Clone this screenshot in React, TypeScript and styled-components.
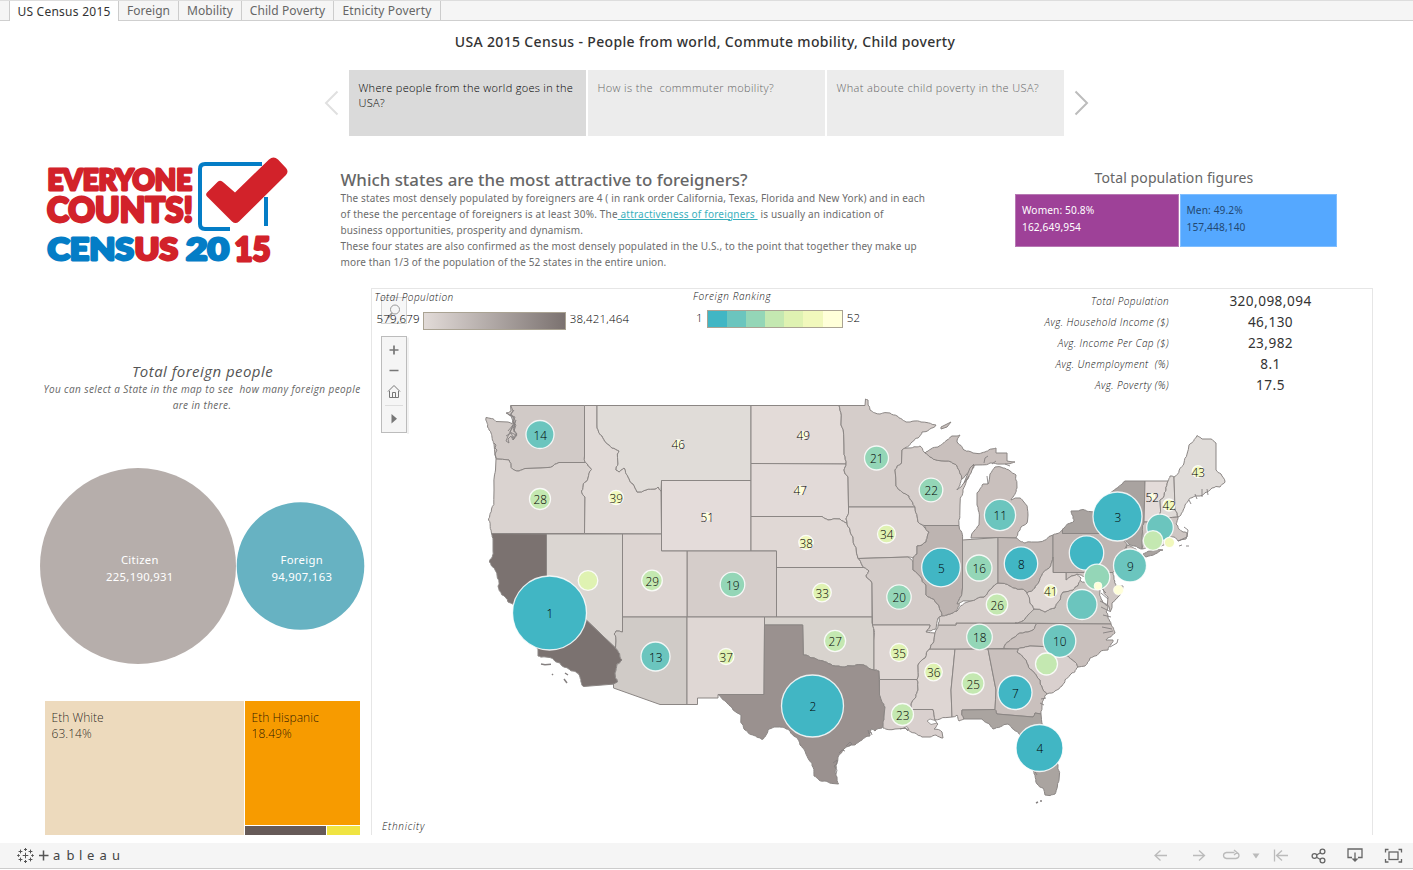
import React from "react";
import styled, { createGlobalStyle } from "styled-components";

const GlobalStyle = createGlobalStyle`
  * { box-sizing: border-box; }
  body { margin: 0; background: #fff; font-family: "Noto Sans", "Open Sans", sans-serif; color: #555; }
  p, h1, h2, h3 { margin: 0; font-weight: 400; }
`;

const Page = styled.div`
  width: 1413px;
  height: 870px;
  display: flex;
  flex-direction: column;
  overflow: hidden;
`;

/* ---------- sheet tabs ---------- */
const TabBar = styled.nav`
  height: 21px;
  flex: none;
  display: flex;
  padding-left: 1px;
  border-top: 1px solid #ddd;
  background: #f5f5f5;
  box-shadow: inset 0 -1px 0 #cfcfcf;
`;
const TabLead = styled.span`
  width: 9px;
  border-right: 1px solid #ccc;
`;
const Tab = styled.button<{ $w: number; $ls: number; $active?: boolean }>`
  width: ${(p) => p.$w}px;
  height: ${(p) => (p.$active ? 20 : 19)}px;
  padding: 1px 0 0;
  border: 0;
  border-right: 1px solid #ccc;
  background: ${(p) => (p.$active ? "#fff" : "transparent")};
  color: ${(p) => (p.$active ? "#333" : "#666")};
  font: 400 12px/18px "Noto Sans", sans-serif;
  letter-spacing: ${(p) => p.$ls}px;
  white-space: nowrap;
`;

/* ---------- dashboard ---------- */
const Dashboard = styled.main`
  height: 814px;
  flex: none;
  overflow: hidden;
  display: flex;
  flex-direction: column;
`;
const Title = styled.h1`
  height: 49px;
  padding-top: 11px;
  text-align: center;
  padding-right: 3px;
  font: 500 14px/20px "Noto Sans", sans-serif;
  letter-spacing: 0.34px;
  color: #333;
`;
const Story = styled.div`
  display: flex;
  align-items: center;
  height: 66px;
  padding-left: 324px;
`;
const StoryPoint = styled.div<{ $active?: boolean; $ls?: number }>`
  width: 237px;
  height: 66px;
  margin-right: 2px;
  padding: 10px 9.5px;
  background: ${(p) => (p.$active ? "#dadada" : "#ececec")};
  color: ${(p) => (p.$active ? "#000" : "#666")};
  font: 300 11px/15px "Open Sans", sans-serif;
  letter-spacing: ${(p) => p.$ls ?? 0.3}px;
  white-space: pre;
`;
const Arrow = styled.svg`
  width: 25px;
  height: 28px;
  fill: none;
  stroke-width: 2;
`;

const Intro = styled.section`
  height: 152px;
  flex: none;
  display: flex;
`;
const LogoBox = styled.div`
  width: 340.5px;
  padding: 16px 0 0 40px;
`;
const Article = styled.article`
  width: 674.5px;
  padding-top: 34px;
`;
const ArticleTitle = styled.h2`
  font: 500 16.85px/20px "Noto Sans", sans-serif;
  color: #666;
  white-space: nowrap;
`;
const Line = styled.p<{ $ls?: number }>`
  position: relative;
  top: -0.5px;
  font: 400 10px/16px "Noto Sans", sans-serif;
  letter-spacing: ${(p) => p.$ls ?? 0.14}px;
  color: #6c6c6c;
  white-space: pre;
`;
const Link = styled.a`
  color: #3ab0bd;
  text-decoration: underline;
  letter-spacing: 0.2px;
`;
const Population = styled.div`
  width: 322px;
  padding-top: 32px;
`;
const PopulationTitle = styled.h3`
  font: 400 14px/20px "Noto Sans", sans-serif;
  letter-spacing: 0.1px;
  text-align: center;
  padding-right: 4px;
  color: #666;
`;
const PopulationBar = styled.div`
  display: flex;
  margin-top: 6px;
  gap: 1px;
`;
const Share = styled.div<{ $w: number; $bg: string; $fg: string; $edge: string }>`
  width: ${(p) => p.$w}px;
  height: 53px;
  padding: 7px 6px;
  border: 1px solid ${(p) => p.$edge};
  background: ${(p) => p.$bg};
  color: ${(p) => p.$fg};
  font: 400 10.2px/17px "Noto Sans", sans-serif;
  letter-spacing: 0.1px;
`;

const Lower = styled.section`
  display: flex;
  height: 547px;
`;
const Side = styled.aside`
  width: 371px;
  padding-top: 73px;
`;
const SideTitle = styled.h3`
  font: italic 400 15px/20px "Open Sans", sans-serif;
  letter-spacing: 0.45px;
  text-align: center;
  margin-left: 34px;
  color: #555;
`;
const SideNote = styled.p`
  margin-left: 33px;
  font: italic 400 10px/16px "Open Sans", sans-serif;
  letter-spacing: 0.4px;
  text-align: center;
  white-space: pre;
  color: #666;
`;
const Circles = styled.svg`
  display: block;
  width: 371px;
  height: 200px;
  margin-top: 53px;
`;
const Treemap = styled.div`
  display: flex;
  gap: 1px;
  width: 316px;
  height: 134px;
  margin: 35px 0 0 45px;
`;
const TreeColumn = styled.div`
  display: flex;
  flex-direction: column;
  gap: 1px;
`;
const TreeRow = styled.div`
  display: flex;
  gap: 1px;
`;
const TreeCell = styled.div<{ $w: number; $h: number; $bg: string; $ls?: number }>`
  width: ${(p) => p.$w}px;
  height: ${(p) => p.$h}px;
  padding: ${(p) => (p.$h > 20 ? "9px 6.5px" : "0")};
  background: ${(p) => p.$bg};
  font: 300 12px/16px "Open Sans", sans-serif;
  letter-spacing: ${(p) => p.$ls ?? 0.03}px;
  color: rgba(0, 0, 0, 0.85);
`;

/* ---------- map panel ---------- */
const MapPanel = styled.div`
  width: 1002px;
  height: 547px;
  display: grid;
  border: 1px solid #e6e6e6;
  border-bottom: 0;
  & > * { grid-area: 1 / 1; }
`;
const MapSvg = styled.svg`
  width: 1000px;
  height: 546px;
`;
const Overlay = styled.div`
  display: flex;
  flex-direction: column;
  justify-content: space-between;
  height: 544px;
  z-index: 1;
`;
const LegendRow = styled.div`
  display: flex;
  height: 120px;
`;
const Legend = styled.div<{ $w: number; $top: number; $pad: number }>`
  width: ${(p) => p.$w}px;
  padding: ${(p) => p.$top}px 0 0 ${(p) => p.$pad}px;
`;
const Caption = styled.div<{ $ls?: number }>`
  font: italic 300 10px/14px "Open Sans", sans-serif;
  letter-spacing: ${(p) => p.$ls ?? 0.6}px;
  color: #111;
`;
const Scale = styled.div<{ $top: number; $pad: number }>`
  display: flex;
  align-items: center;
  gap: 4px;
  padding-left: ${(p) => p.$pad}px;
  margin-top: ${(p) => p.$top}px;
  font: 300 11.5px/18px "Open Sans", sans-serif;
  letter-spacing: 0.2px;
  color: #000;
`;
const Ramp = styled.div`
  width: 143px;
  height: 18px;
  margin-top: 4px;
  margin-left: -1px;
  border: 1px solid #aaa393;
  background: linear-gradient(90deg, #e2dbd8, #7b7270);
`;
const Steps = styled.div`
  display: flex;
  width: 136px;
  height: 18px;
  margin-top: 2px;
  border: 1px solid #aaa393;
`;
const Step = styled.i<{ $bg: string }>`
  flex: 1;
  background: ${(p) => p.$bg};
`;
const Facts = styled.dl`
  margin: 0;
  padding-top: 1px;
  flex: 1;
`;
const Fact = styled.div`
  display: flex;
  height: 21px;
  align-items: center;
`;
const FactName = styled.dt`
  width: 176px;
  text-align: right;
  font: italic 300 10px/14px "Open Sans", sans-serif;
  letter-spacing: 0.42px;
  color: #111;
  white-space: pre;
`;
const FactValue = styled.dd`
  width: 204px;
  margin: 0;
  padding-right: 1px;
  text-align: center;
  font: 400 13.6px/20px "Noto Sans", sans-serif;
  letter-spacing: 0.45px;
  color: #333;
`;
const MapTools = styled.svg`
  width: 30px;
  height: 142px;
  margin: 3px 0 0 8px;
  z-index: 0;
`;

/* ---------- footer ---------- */
const Footer = styled.footer`
  height: 26px;
  margin-top: 8px;
  flex: none;
  display: flex;
  justify-content: space-between;
  align-items: center;
  background: #f5f5f5;
  border-bottom: 1px solid #ccc;
`;
const Brand = styled.svg`
  width: 120px;
  height: 25px;
`;
const Tools = styled.svg`
  width: 283px;
  height: 25px;
`;

/* ---------- map data ---------- */
type State = { f: string; p: string };
const states: State[] = [
  { f: "#d1cac7", p: "510.5,405.5 584.5,405.5 584.5,456 585.5,462.5 559,462.5 541,468 525,468.5 519,471 511,467.5 509,460 496,459 495,455 494,444 491,433 487.5,427 486,417.5 496,421.5 508,422 512,424 513,417 509,415 506,413 511,411" },
  { f: "#dad3d0", p: "496,459 509,460 511,467.5 519,471 525,468.5 541,468 559,462.5 585.5,462.5 591.5,469.5 588,478 581.5,491 585,497 584.5,533.5 491.5,533.5 488.5,520 491.5,509 494,490 495.5,470" },
  { f: "#e1dad7", p: "584.5,405.5 597,405.5 597,425 602,436 612,448 619,451 618,464 616,470 619,472 624,468 628,477 633,484 637,492 646,490 655,489 658,487 661,491 661.5,534 584.5,533.5 585,497 581.5,491 588,478 591.5,469.5 585.5,462.5 584.5,456" },
  { f: "#e0dcd8", p: "597,405.5 597,425 602,436 612,448 619,451 618,464 616,470 619,472 624,468 628,477 633,484 637,492 646,490 655,489 658,487 661,491 661.5,480.5 751,480.5 751,405.5" },
  { f: "#e4dcda", p: "661.5,480.5 751,480.5 751,551 661.5,551" },
  { f: "#e3dbd8", p: "751,405.5 839,405.5 841,425 844,445 846,464 751,463.5" },
  { f: "#e2dad8", p: "751,463.5 846,464 844,470 848,477 848.5,507 846,519 847,523 840,519 828,520 822,516.5 751,516.5" },
  { f: "#e0d8d5", p: "751,516.5 822,516.5 828,520 840,519 847,523 853,537 858,558.5 862,565 864,567.5 776.5,567.5 776.5,551 751,551" },
  { f: "#ddd6d3", p: "776.5,567.5 864,567.5 869,571 866,576 872,583 872,617 776.5,617" },
  { f: "#d5cdca", p: "687,551 776.5,551 776.5,617 687,617" },
  { f: "#ddd5d2", p: "622.5,534 661.5,534 661.5,551 687,551 687,617 622.5,617" },
  { f: "#dbd6d2", p: "546.5,534 622.5,534 622.5,632 616,631 614,634 615.5,648 546.5,582" },
  { f: "#7b7270", p: "491.5,533.5 546.5,534 546.5,582 615.5,648 622,660 617,664 615,673 617.5,682 615,684 583.5,686.5 580,677 568,668.5 560,663 550,657.5 538,656 538,649 525,630 513,604 508,602 498,586 497,575 489.5,562 493,551 493,540" },
  { f: "#d0cbc7", p: "622.5,617 687,617 687,704.5 660,704.5 613.5,688 613.5,684 617.5,682 615,673 617,664 622,660 615.5,648 614,634 616,631 622.5,632" },
  { f: "#dfd7d4", p: "687,617 764.5,617 764.5,625 764,694.5 718,694.5 718,698 697.5,698 697.5,704.5 687,704.5" },
  { f: "#d8d3ce", p: "764.5,617 872,617 874,640 874,670 864,665 853,666 842,667 830,664 823,661 814,658 803.3,655 802.7,625 764.5,625" },
  { f: "#9a918f", p: "764.5,625 802.7,625 803.3,655 814,658 823,661 830,664 842,667 853,666 864,665 874,670 879,671 879.5,695 885,707 884,717 882,728 875,731 871,729 870,736 860,741 851,745 845,748 838,757 836,765 837,777 838.5,784 825,781 814,776 809,760 800,745 790,731 785,728 774,727 769,729 766,735 762,739.5 753,735 744,729 741,715 727,703 718,694.5 764,694.5" },
  { f: "#d5cdca", p: "839,405.5 865,405.5 865.5,399 868,400 870,410 880,414 890,413 897,416 906,422 914,421 921,422 936,425 922,432 912,442 902,450 901.5,463 895,470 896,486 909,496 915,507 848.5,507 848,477 844,470 846,464 844,445 841,425" },
  { f: "#ddd5d2", p: "848.5,507 915,507 918,522 929,532 926,542 917,546 917,554 913,558 908,557 858,558.5 853,537 847,523 846,519" },
  { f: "#d4ccc9", p: "858,558.5 908,557 913,562 913,570 926,585 926,595 939,606 942,616 938,618 936,629 926,632 930,625 872.5,625 872,583 866,576 869,571 864,567.5 862,565" },
  { f: "#ded6d3", p: "872.5,625 930,625 926,632 935,633 930,649 918,665 917,679.5 879.5,679.5 879,671 874,670 874,640" },
  { f: "#d9d0ce", p: "879.5,679.5 917,679.5 918,690 912,702 911,709.5 933,709.5 935,720 938,724 934,729 942,732 943,738 936,735 930,737 922,737 915,733 905,728 895,729 883,728 884,717 885,707 879.5,695" },
  { f: "#ded6d3", p: "930,649 955,649 951,690 952,717 940,719 935,720 933,709.5 911,709.5 912,702 918,690 917,679.5 918,665" },
  { f: "#d8cfcc", p: "955,649 988,649 996,690 995,709.5 962,710 964,719 959,721 957,715 952,717 951,690" },
  { f: "#d2cac7", p: "956,623 1037,623.5 1033,630 1013,638 1005,645 1004,648.5 955,649 930,649 935,633 938,625 956,625" },
  { f: "#d7cfcc", p: "938,625 939,617 947,615 957,611 970,601 984,597 992,588 998,583 1010,586 1022,589 1027,593 1030,603 1034,609 1025,619 1015,623 956,623 956,625" },
  { f: "#bdb4b1", p: "924,525.5 959,525.5 962.5,540 962.5,588 959,600 957,611 947,615 942,616 939,606 926,595 926,585 913,570 913,558 917,554 917,546 926,542 929,532" },
  { f: "#cfcac6", p: "962.5,540 998,537.5 998,583 992,588 984,597 970,601 957,604 959,600 962.5,588" },
  { f: "#d5cdca", p: "902,450 908,448 920,446 924,452 930,457 945,461 957,466 962,479 960,485 957,490 961,487 969,476 963,492 960,505 959,525.5 924,525.5 918,522 915,507 909,496 896,486 895,470 901.5,463" },
  { f: "#c9c0bd", p: "925,453 938,447 947,440 952,436 960,435 957,442 964,450 973,453 985,452 996,448 996,453 1007,453 1007,461 1015,462 1005,464 990,463 975,465 966,475 962,479 957,466 945,461 930,457" },
  { f: "#c9c0bd", p: "971,538 979,525 977,505 977,493 983,484 988,484 990,474 995,467 1003,468 1016,475 1017,488 1011,500 1020,498 1024,502 1028,515 1027,523 1021,527 1016,538 998,537.5" },
  { f: "#c1b8b5", p: "998,537.5 1016,538 1025,543 1038,542 1053,535 1053,557 1050,567 1042,575 1035,588 1027,593 1022,589 1010,586 998,583" },
  { f: "#bfb6b3", p: "1053,535 1062.5,530 1062.5,533.5 1123,533.5 1127,545 1122,558 1113,572.5 1053,572.5" },
  { f: "#a9a3a0", p: "1062.5,533.5 1062.5,529 1074,521 1071,511 1083,509.5 1094,512 1105,500 1113,491 1125,481 1145,481 1144,520 1142,535 1142,549 1130,545 1123,538 1123,533.5" },
  { f: "#a9a3a0", p: "1143,554 1150,551 1163,550 1155,554 1146,557" },
  { f: "#e3dbd9", p: "1145,481 1168,481 1166,490 1160,500 1157,522 1144,522" },
  { f: "#dfdad7", p: "1168,481 1170,476 1174,477 1175,510 1178,517 1157,522 1160,500 1166,490" },
  { f: "#e0dcd9", p: "1175,510 1174,477 1184,463 1189,445 1197,435.5 1202,439 1211,439 1216,443 1216,470 1221,474 1225,482 1220,487 1212,488 1207,492 1200,496 1195,496 1185,505 1178,517" },
  { f: "#cec6c3", p: "1144,522 1157,522 1178,517 1176,524 1183,532 1187,533 1186,539 1178,541 1174,537 1162,536 1143,537" },
  { f: "#d8d0cd", p: "1143,537 1162,536 1161,546 1142,549" },
  { f: "#e2dad8", p: "1162,536 1170,537 1169,545 1161,546" },
  { f: "#cac1be", p: "1127,545 1136,549 1137,560 1131,578 1122,572 1118,567 1124,558" },
  { f: "#cfc7c4", p: "1066,572.5 1113,572.5 1116,586 1123,586 1120,595 1112,603 1110,612 1108,597 1102,585 1095,580 1085,577 1077,574 1066,580" },
  { f: "#cac4c0", p: "1015,623 1025,619 1034,609 1045,612 1055,608 1060,600 1063,592 1073,590 1080,580 1092,583 1100,590 1102,600 1108,606 1106,612 1111,624" },
  { f: "#dfd7d4", p: "1053,557 1053,572.5 1066,572.5 1066,580 1077,574 1081,578 1073,590 1063,592 1060,600 1055,608 1045,612 1034,609 1030,603 1027,593 1035,588 1042,575 1050,567" },
  { f: "#c9c0bd", p: "1037,623.5 1111,624 1115,633 1106,640 1113,640 1108,650 1100,652 1090,658 1085,666 1078,667 1068,656 1043,646.5 1030,646 1018,649 1004,648.5 1005,645 1013,638 1033,630" },
  { f: "#d9d0ce", p: "1017,652 1018,649 1030,646 1043,646.5 1068,656 1078,667 1070,675 1062,686 1047,694 1040,680 1028,665" },
  { f: "#c9c0bd", p: "988,649 1018,649 1017,652 1028,665 1040,680 1047,694 1042,705 1041,714 1035,713 1033,717 997,714 995,709.5 996,690" },
  { f: "#aaa4a0", p: "962,710 995,709.5 997,714 1033,717 1035,713 1041,714 1043,725 1058,765 1059,780 1055,794 1045,795 1043,788 1037,784 1035,775 1030,765 1020,735 1008,724 993,729 990,725 982,719 964,719" },
];

// Roughens slanted edges the same way from either side, so neighbours share a border.
const hash = (a: number, b: number) => {
  const s = Math.sin(a * 12.9898 + b * 78.233) * 43758.5453;
  return s - Math.floor(s) - 0.5;
};
type Pt = [number, number];
const split = (a: Pt, b: Pt, depth: number): Pt[] => {
  const dx = b[0] - a[0];
  const dy = b[1] - a[1];
  const len = Math.hypot(dx, dy);
  if (depth === 0 || len < 2.4 || len > 27 || Math.abs(dx) < 0.7 || Math.abs(dy) < 0.7) return [a];
  const flip = a[0] > b[0] || (a[0] === b[0] && a[1] > b[1]) ? -1 : 1;
  const k = hash(a[0] + b[0], a[1] + b[1]) * 0.26 * flip;
  const m: Pt = [(a[0] + b[0]) / 2 - dy * k, (a[1] + b[1]) / 2 + dx * k];
  return [...split(a, m, depth - 1), ...split(m, b, depth - 1)];
};
const outline = (s: string) => {
  const pts = s.split(" ").map((v) => v.split(",").map(Number) as Pt);
  const out = pts.flatMap((p, i) => split(p, pts[(i + 1) % pts.length], 3));
  return "M" + out.map((p) => p[0].toFixed(1) + " " + p[1].toFixed(1)).join("L") + "Z";
};

const T1 = "#41b6c4", T2 = "#6bc5be", T3 = "#94d6b7", T4 = "#c4e8b1", T5 = "#dff2b2", T6 = "#f1f8bc", T7 = "#ffffd9";
// x, y, radius, fill, label
type Bubble = [number, number, number, string, string?];
const bubbles: Bubble[] = [
  [549.5, 613, 37, T1, "1"], [812.5, 706, 31, T1, "2"], [1117.5, 516.5, 24.5, T1, "3"], [1039.5, 748, 23.5, T1, "4"],
  [941, 567.5, 19.3, T1, "5"], [1086.5, 553, 17.2, T1], [1015, 692.5, 17, T1, "7"], [1021, 563.5, 16.7, T1, "8"],
  [1130, 565.5, 16.5, T2, "9"], [1059.5, 641, 16.3, T2, "10"], [1000, 515, 15.6, T2, "11"], [1082, 604.5, 15, T2],
  [655.5, 656.5, 14.5, T2, "13"], [540, 434.5, 14, T2, "14"], [1160, 527.5, 13.3, T2], [979, 568, 13, T3, "16"],
  [1097, 577, 12.8, T3], [979.5, 637, 12.8, T3, "18"], [732.5, 584.5, 12.3, T3, "19"], [899, 597, 12.2, T3, "20"],
  [876.5, 458, 12, T3, "21"], [931, 490, 11.8, T3, "22"], [902.5, 714.5, 11, T4, "23"], [1046.5, 664, 11, T4],
  [973, 683.5, 11, T4, "25"], [997, 604.5, 10.7, T4, "26"], [835, 641, 10.6, T4, "27"], [540, 499, 10.5, T4, "28"],
  [652, 580.5, 10.3, T4, "29"], [1153, 540.5, 9.8, T4], [588, 580.5, 9.8, T5], [822, 592.5, 9.3, T5, "33"],
  [886.5, 534, 9, T5, "34"], [899, 652.5, 9, T5, "35"], [933.5, 672, 8.8, T5, "36"], [726, 656.5, 8, T5, "37"],
  [806, 542.5, 7.2, T6, "38"], [616, 497.5, 7.2, T6, "39"], [1169.5, 542.5, 5.2, T6], [1050.5, 591, 6.4, T6, "41"],
  [1169, 505, 6, T6, "42"], [1198, 471.5, 5.8, T6, "43"], [1118.5, 590, 5, T7], [1098, 586, 4, T7],
  [678, 444, 4.5, T7, "46"], [800, 490, 4.5, T7, "47"], [803, 435, 4, T7, "49"], [707, 516.5, 4, T7, "51"], [1152, 496.5, 3, T7, "52"],
];

const Bubbles = () => (
  <>
    {bubbles.map(([x, y, r, f], i) => (
      <circle key={i} cx={x} cy={y} r={r} fill={f} stroke="#fff" strokeWidth={r > 5 ? 1.3 : 0.7} strokeOpacity={0.85} />
    ))}
    <g fontFamily="Open Sans, sans-serif" fontSize="11.8" fontWeight="300" fill="#000" textAnchor="middle">
      {bubbles.map(([x, y, , , t], i) => t && <text key={i} x={x + 0.3} y={y + 5}>{t}</text>)}
    </g>
  </>
);

const UsMap = () => (
  <MapSvg viewBox="372 289 1000 546">
    <g stroke="#8b8684" strokeWidth="1" strokeLinejoin="round">
      {states.map((s, i) => <path key={i} d={outline(s.p)} fill={s.f} />)}
      <path d="M970 468l4-4-3 9-7 10zM941 427l10-5-4 5-6 2z" fill="#c9c0bd" />
    </g>
    <path d="M927 721l3-2 5 1.500 2 2.500-6 1.500zM904 728l3-1.500 2 3z" fill="#fff" stroke="#8b8684" strokeWidth=".8" />
    <g fill="none" stroke="#858080" strokeWidth="0.9">
      <path d="M511 406l2 5-3 4 5 2-2 5 3 3-2 6 3 4-4 5-2-4-3 3 1 4-3-2 2-5 3-6 3-8M507 413l4 3 3 8-4 8 6 3-3 5M514 410l-3 4 4 6-1 12M508 431l5-6M516 420l-3 9 4 5-5 4M506 436l5-3 3 6" />
      <path d="M541 664l4 .8 6-.5M552 674l1 1M565 673l3 2M564 679l3 4M1036 803l2-1M1040 801l2 0" strokeWidth="1.5" />
      <path d="M494 443l2 2-1 3 2 2-2 4 1 4" />
      <path d="M846 746l4-4 2 2-3 2M839 753l3-3 3 1M833 763l4-3 0 4-3 2 3 4-1 4M868 730l1 4 2-2 1 3M900 729l5-1 3 3" />
      <path d="M1106 593l-6-6M1108 599l-7-6M1108 605l-8-4M1109 611l-8-4M1111 617l-8-2M1102 627l10 2M1103 633l10-2M1110 647l7-4 1-4M1046 698l-5 1M1044 705l-4-2" />
      <path d="M1178 541l9-4 1-7-4-3M1186 546l3 0M1179 546l3-1M1195 494l2 5M1202 489v8M1207 489l1 6M1189 500l2 4" />
      <path d="M984 463l1-5 3-2M992 464l4-3M1005 464l5 2M988 484l-1-8M1034 770l3 5" />
    </g>
    <Bubbles />
  </MapSvg>
);

const Tool = () => (
  <MapTools viewBox="380 292 30 142">
    <g fill="#f5f5f5" stroke="#bcbcbc">
      <path d="M383.500 434.500h24.500v-97" stroke="#e4e4e4" fill="none" />
      <rect x="381.500" y="297.500" width="25" height="26" fill="#f7f7f7" stroke="#d4d4d4" />
      <rect x="381.500" y="336.500" width="25" height="96" />
    </g>
    <g fill="none" stroke="#777">
      <circle cx="395" cy="309.500" r="4.500" stroke="#999" />
      <path d="M392 313l-4 5" stroke="#999" strokeWidth="1.800" />
      <path d="M389.500 350h9M394 345.500v9M389.500 370.500h9" strokeWidth="1.700" />
      <path d="M388 391.500l6-6 6 6M389.500 391v6.500h9v-6.500M392.500 397.500v-5h3v5" />
      <path d="M385 405.500h18" stroke="#ddd" />
      <path d="M391.500 414v9.500l5.500-4.800z" fill="#777" stroke="none" />
    </g>
  </MapTools>
);

const Logo = () => (
  <svg width="252" height="124" viewBox="40 152 252 124">
    <g fontFamily="Lato, sans-serif" fontWeight="900" strokeWidth="2.800" strokeLinejoin="round">
      <g fill="#d2222a" stroke="#d2222a">
        <text x="47.500" y="190" fontSize="29" textLength="144.500" lengthAdjust="spacingAndGlyphs">EVERYONE</text>
        <text x="47" y="221.500" fontSize="35" textLength="146" lengthAdjust="spacingAndGlyphs">COUNTS!</text>
      </g>
      <g fill="#047dc6" stroke="#047dc6">
        <text x="47.500" y="260" fontSize="31" textLength="86.500" lengthAdjust="spacingAndGlyphs">CENS</text>
        <text x="186" y="260" fontSize="31" textLength="43" lengthAdjust="spacingAndGlyphs">20</text>
      </g>
      <g fill="#d2222a" stroke="#d2222a">
        <text x="134.500" y="260" fontSize="31" textLength="43.500" lengthAdjust="spacingAndGlyphs">US</text>
        <text x="234.500" y="261" fontSize="32.500" textLength="36" lengthAdjust="spacingAndGlyphs">15</text>
      </g>
    </g>
    <path d="M262 164h-57q-5 0-5 5v55q0 5 5 5h25M266 197v29" fill="none" stroke="#047dc6" strokeWidth="4" />
    <path d="M211 192l10-7 14 15 38-38" fill="none" stroke="#fff" strokeWidth="5" />
    <path d="M207.500 192l10-10q3-2.500 6 .5l11.500 10 34-33q4.500-4 9 0l8 8.500q3 3.500 0 7l-47 46.500q-3.500 3-7 0l-25-25q-2-2.500.5-4.500z" fill="#d2222a" />
  </svg>
);

const Sparkle = ({ x, y, s }: { x: number; y: number; s: number }) => (
  <path d={`M${x - s} ${y}h${2 * s}M${x} ${y - s}v${2 * s}`} />
);

const facts = [
  ["Total Population", "320,098,094"],
  ["Avg. Household Income ($)", "46,130"],
  ["Avg. Income Per Cap ($)", "23,982"],
  ["Avg. Unemployment  (%)", "8.1"],
  ["Avg. Poverty (%)", "17.5"],
];

export default function App() {
  return (
    <Page>
      <GlobalStyle />
      <TabBar>
        <TabLead />
        <Tab $w={109} $ls={0.25} $active>US Census 2015</Tab>
        <Tab $w={60} $ls={0}>Foreign</Tab>
        <Tab $w={63} $ls={0.1}>Mobility</Tab>
        <Tab $w={92} $ls={0.1}>Child Poverty</Tab>
        <Tab $w={107} $ls={0.15}>Etnicity Poverty</Tab>
      </TabBar>
      <Dashboard>
        <Title>USA 2015 Census - People from world, Commute mobility, Child poverty</Title>
        <Story>
          <Arrow viewBox="0 0 25 28" stroke="#e0e0e0"><path d="M13.500 2.500l-11.500 11.500 11.500 11.500" /></Arrow>
          <StoryPoint $active>{"Where people from the world goes in the\nUSA?"}</StoryPoint>
          <StoryPoint $ls={0.36}>How is the&nbsp; commmuter mobility?</StoryPoint>
          <StoryPoint $ls={0.37}>What aboute child poverty in the USA?</StoryPoint>
          <Arrow viewBox="0 0 25 28" stroke="#bcbcbc"><path d="M9.500 2.500l11.500 11.500-11.500 11.500" /></Arrow>
        </Story>
        <Intro>
          <LogoBox><Logo /></LogoBox>
          <Article>
            <ArticleTitle>Which states are the most attractive to foreigners?</ArticleTitle>
            <Line>The states most densely populated by foreigners are 4 ( in rank order California, Texas, Florida and New York) and in each</Line>
            <Line $ls={0.18}>of these the percentage of foreigners is at least 30%. The<Link> attractiveness of foreigners </Link> is usually an indication of</Line>
            <Line>business opportunities, prosperity and dynamism.</Line>
            <Line>These four states are also confirmed as the most densely populated in the U.S., to the point that together they make up</Line>
            <Line $ls={0.12}>more than 1/3 of the population of the 52 states in the entire union.</Line>
          </Article>
          <Population>
            <PopulationTitle>Total population figures</PopulationTitle>
            <PopulationBar>
              <Share $w={163.5} $bg="#9e4198" $edge="#b779b3" $fg="#fff">Women: 50.8%<br />162,649,954</Share>
              <Share $w={157.5} $bg="#55a8ff" $edge="#80beff" $fg="#234873">Men: 49.2%<br />157,448,140</Share>
            </PopulationBar>
          </Population>
        </Intro>
        <Lower>
          <Side>
            <SideTitle>Total foreign people</SideTitle>
            <SideNote>{"You can select a State in the map to see  how many foreign people\nare in there."}</SideNote>
            <Circles viewBox="0 466 371 200">
              <circle cx="138" cy="566" r="98" fill="#b6aeab" />
              <circle cx="300.500" cy="566" r="63.800" fill="#67b2c2" />
              <g fill="#fff" fontFamily="Noto Sans, sans-serif" fontSize="11.300" letterSpacing=".3" textAnchor="middle">
                <text x="139.800" y="564">Citizen</text>
                <text x="139.800" y="581">225,190,931</text>
                <text x="301.800" y="564">Foreign</text>
                <text x="301.800" y="581">94,907,163</text>
              </g>
            </Circles>
            <Treemap>
              <TreeCell $w={199} $h={134} $bg="#eddabd">Eth White<br />63.14%</TreeCell>
              <TreeColumn>
                <TreeCell $w={115} $h={124} $bg="#f79b00">Eth Hispanic<br />18.49%</TreeCell>
                <TreeRow>
                  <TreeCell $w={81} $h={9} $bg="#665a58" />
                  <TreeCell $w={33} $h={9} $bg="#f0e442" />
                </TreeRow>
              </TreeColumn>
            </Treemap>
          </Side>
          <MapPanel>
            <UsMap />
            <Tool />
            <Overlay>
              <LegendRow>
                <Legend $w={321} $top={1} $pad={2.5}>
                  <Caption $ls={0.5}>Total Population</Caption>
                  <Scale $top={4} $pad={2}>579,679<Ramp />38,421,464</Scale>
                </Legend>
                <Legend $w={300} $top={-1} $pad={1}>
                  <Caption>Foreign Ranking</Caption>
                  <Scale $top={5} $pad={3}>
                    1
                    <Steps>{[T1, T2, T3, T4, T5, T6, T7].map((c) => <Step key={c} $bg={c} />)}</Steps>
                    52
                  </Scale>
                </Legend>
                <Facts>
                  {facts.map(([name, value]) => (
                    <Fact key={name}>
                      <FactName>{name}</FactName>
                      <FactValue>{value}</FactValue>
                    </Fact>
                  ))}
                </Facts>
              </LegendRow>
              <Legend $w={200} $top={0} $pad={10}><Caption $ls={0.75}>Ethnicity</Caption></Legend>
            </Overlay>
          </MapPanel>
        </Lower>
      </Dashboard>
      <Footer>
        <Brand viewBox="0 843 120 25">
          <g stroke="#555" fill="none">
            <Sparkle x={25.500} y={855.500} s={2.800} />
            <Sparkle x={20.500} y={851.500} s={1.900} />
            <Sparkle x={30.500} y={851.500} s={1.900} />
            <Sparkle x={20.500} y={859.500} s={1.900} />
            <Sparkle x={30.500} y={859.500} s={1.900} />
            <Sparkle x={25.500} y={849.500} s={1.500} />
            <Sparkle x={25.500} y={861.500} s={1.500} />
            <Sparkle x={18.500} y={855.500} s={1.300} />
            <Sparkle x={32.500} y={855.500} s={1.300} />
            <path d="M39 855.500h9.500M43.500 850.500v10" strokeWidth="1.500" />
          </g>
          <g fontFamily="Noto Sans, sans-serif" fontSize="13" fill="#444">
            <text x="53" y="860">a</text><text x="66.500" y="860">b</text><text x="79" y="860">l</text>
            <text x="87" y="860">e</text><text x="99.500" y="860">a</text><text x="112" y="860">u</text>
          </g>
        </Brand>
        <Tools viewBox="1130 843 283 25" fill="none" stroke="#bbb" strokeWidth="1.300">
          <path d="M1167 855.500h-12M1160.500 850.500l-5.500 5 5.500 5M1193 855.500h11M1199 850.500l5.500 5-5.500 5" />
          <path d="M1234 858.500h-7.500q-3-.5-3-3t3-3h8M1231 858.500h5q3-.5 3-3t-3-3M1234 850l3 2.500-3 2.500" />
          <path d="M1252.500 853.500h7l-3.500 5z" fill="#bbb" stroke="none" />
          <path d="M1274.500 849.500v12M1288 855.500h-11M1282 850.500l-5.500 5 5.500 5" />
          <g stroke="#666">
            <circle cx="1314.500" cy="856" r="2.400" /><circle cx="1322.500" cy="851.500" r="2.400" /><circle cx="1322.500" cy="860.500" r="2.400" />
            <path d="M1316.500 855l4-2.300M1316.500 857.300l4 2.200" />
            <path d="M1352 857.500h-4v-8.500h14v8.500h-4M1355 852.500v7" />
            <path d="M1351.500 858.500h7l-3.500 3.500z" fill="#666" stroke="none" />
            <rect x="1389" y="852" width="9" height="7.500" />
            <path d="M1385.500 852.500v-3h3M1398.500 849.500h3v3M1385.500 859v3h3M1398.500 862h3v-3" />
          </g>
        </Tools>
      </Footer>
    </Page>
  );
}
